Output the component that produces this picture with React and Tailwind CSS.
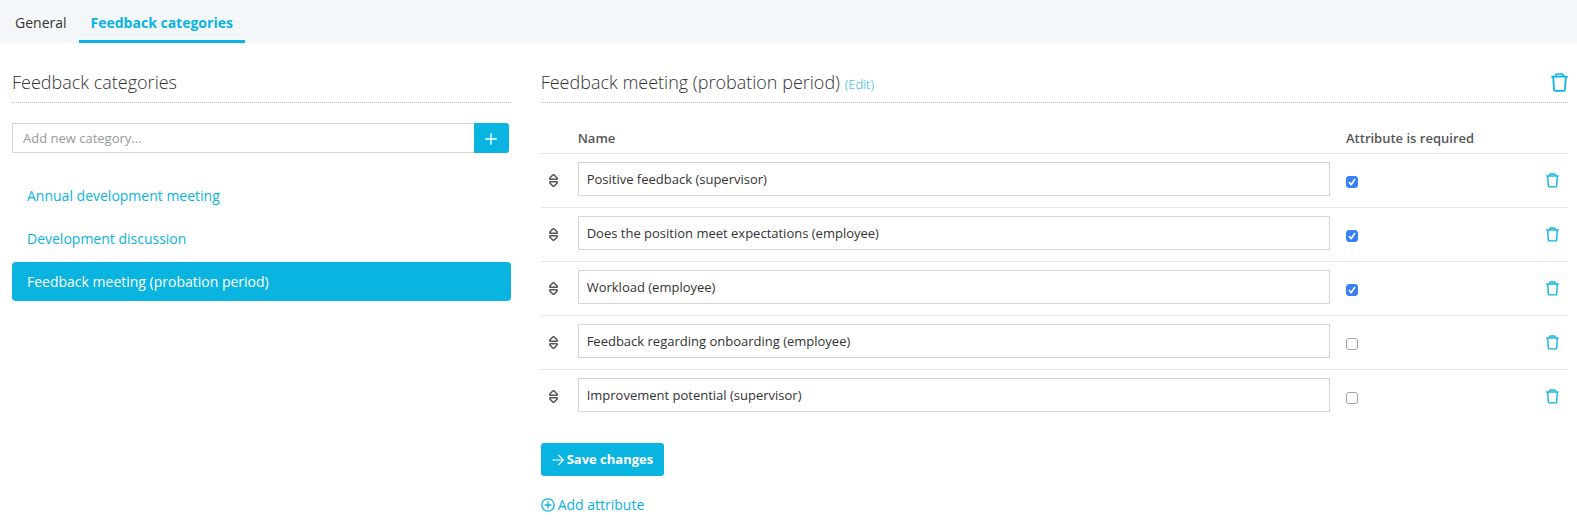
import React, { useState } from "react";

const categories = [
  { id: 1, name: "Annual development meeting" },
  { id: 2, name: "Development discussion" },
  { id: 3, name: "Feedback meeting (probation period)" },
];

const initialAttributes = [
  { id: 1, name: "Positive feedback (supervisor)", required: true },
  { id: 2, name: "Does the position meet expectations (employee)", required: true },
  { id: 3, name: "Workload (employee)", required: true },
  { id: 4, name: "Feedback regarding onboarding (employee)", required: false },
  { id: 5, name: "Improvement potential (supervisor)", required: false },
];

const TrashIcon = ({ className }) => (
  <svg viewBox="0 0 17 19" fill="none" stroke="currentColor" className={className}>
    <path d="M0.3 3.6H16.7" strokeWidth="1.8" />
    <path d="M4.6 3.4C4.6 1.7 5.2 1 6.4 1h4.2c1.2 0 1.8 0.7 1.8 2.4" strokeWidth="1.7" />
    <path d="M2.2 3.8L3 16.6c0.1 0.8 0.5 1.2 1.3 1.2h8.4c0.8 0 1.2-0.4 1.3-1.2L14.8 3.8" strokeWidth="1.8" />
  </svg>
);

const SortIcon = () => (
  <svg viewBox="0 0 9 13" fill="none" stroke="currentColor" strokeWidth="1.5" strokeLinejoin="round" className="w-[9px] h-[13px]">
    <path d="M3.7 1.1L0.9 4.1c-0.4 0.5-0.2 1.2 0.5 1.2h6.2c0.7 0 0.9-0.7 0.5-1.2L5.3 1.1c-0.5-0.5-1.1-0.5-1.6 0z" />
    <path d="M3.7 11.9L0.9 8.9c-0.4-0.5-0.2-1.2 0.5-1.2h6.2c0.7 0 0.9 0.7 0.5 1.2L5.3 11.9c-0.5 0.5-1.1 0.5-1.6 0z" />
  </svg>
);

const Checkbox = ({ label, checked, onChange }) => (
  <span className="relative block size-3">
    <input
      type="checkbox"
      aria-label={label}
      checked={checked}
      onChange={onChange}
      className="block size-3 appearance-none rounded-[3px] border border-[#a3a3a3] bg-white checked:border-[#3880f8] checked:bg-[#3880f8]"
    />
    {checked && (
      <svg viewBox="0 0 12 12" fill="none" stroke="white" strokeWidth="1.6" strokeLinecap="round" strokeLinejoin="round" className="pointer-events-none absolute inset-0 size-3">
        <path d="M3.3 6.6L5.1 8.7L8.6 3.5" />
      </svg>
    )}
  </span>
);

const App = () => {
  const [attributes, setAttributes] = useState(initialAttributes);
  const [activeCategory, setActiveCategory] = useState(3);

  const updateAttribute = (id, changes) => {
    setAttributes(attributes.map((a) => (a.id === id ? { ...a, ...changes } : a)));
  };

  return (
    <div className="bg-white text-sm text-[#333] font-['Open_Sans',sans-serif]">
      {/* Tabs */}
      <nav className="flex bg-[#f3f7fa]">
        <a href="#general" className="h-[43px] pl-[15px] pr-3 pt-3 leading-[22px]">General</a>
        <a href="#categories" className="h-[43px] border-b-3 border-[#0ab4e0] px-3 pt-3 leading-[22px] font-bold text-[#0ab4e0]">
          Feedback categories
        </a>
      </nav>

      <main className="grid grid-cols-3 gap-[30px] pt-6 pl-3 pr-[9px]">
        {/* Category list */}
        <section>
          <h2 className="h-9 border-b border-dotted border-[#bbb] pt-[3px] text-lg leading-6 font-light text-[#333]">Feedback categories</h2>
          <form className="mt-5 mr-[2px] flex" onSubmit={(e) => e.preventDefault()}>
            <input
              type="text"
              aria-label="Add new category"
              placeholder="Add new category..."
              className="h-[30px] min-w-0 flex-1 border border-r-0 border-[#d5d5d5] px-[10px] text-[13px] placeholder:text-[#999]"
            />
            <button type="submit" aria-label="Add" className="flex h-[30px] w-[35px] items-center justify-center rounded-r-[3px] bg-[#0ab4e0] pt-[2px] text-white">
              <svg viewBox="0 0 12 12" stroke="currentColor" strokeWidth="1.3" className="size-3">
                <path d="M6 0.2V11.8M0.2 6H11.8" />
              </svg>
            </button>
          </form>
          <ul className="mt-[23px] flex flex-col gap-1">
            {categories.map((category) => (
              <li key={category.id}>
                <a
                  href="#category"
                  onClick={() => setActiveCategory(category.id)}
                  className={`block rounded-[4px] px-[15px] py-[10px] leading-[19px] ${
                    category.id === activeCategory ? "bg-[#0ab4e0] text-white" : "text-[#0ab4e0]"
                  }`}
                >
                  {category.name}
                </a>
              </li>
            ))}
          </ul>
        </section>

        {/* Attributes of the selected category */}
        <section className="col-span-2">
          <div className="flex h-9 items-start justify-between border-b border-dotted border-[#bbb] pt-[3px]">
            <h2 className="text-lg leading-6 font-light text-[#333]">
              Feedback meeting (probation period) <a href="#edit" className="text-[13px] text-[#0ab4e0]">(Edit)</a>
            </h2>
            <button type="button" aria-label="Delete category" className="mt-[3px] text-[#0ab4e0]">
              <TrashIcon className="w-[17px] h-[19px]" />
            </button>
          </div>

          <table className="mt-5 w-full table-fixed border-separate border-spacing-0">
            <thead>
              <tr className="h-[30px] text-left text-[13px] text-[#555]">
                <th className="w-[29px]"></th>
                <th className="px-2 font-semibold">Name</th>
                <th className="w-[200px] px-2 font-semibold">Attribute is required</th>
                <th className="w-[30px]"></th>
              </tr>
            </thead>
            <tbody>
              {attributes.map((attribute) => (
                <tr key={attribute.id} className="h-[54px]">
                  <td className="border-t border-[#e5e5e5] pl-2 text-[#555]">
                    <SortIcon />
                  </td>
                  <td className="border-t border-[#e5e5e5] px-2 pt-2 pb-[11px]">
                    <input
                      type="text"
                      aria-label="Attribute name"
                      value={attribute.name}
                      onChange={(e) => updateAttribute(attribute.id, { name: e.target.value })}
                      className="block h-[34px] w-full border border-[#d5d5d5] px-2 text-[13px]"
                    />
                  </td>
                  <td className="border-t border-[#e5e5e5] px-2 pt-[2px]">
                    <Checkbox
                      label="Attribute is required"
                      checked={attribute.required}
                      onChange={(e) => updateAttribute(attribute.id, { required: e.target.checked })}
                    />
                  </td>
                  <td className="border-t border-[#e5e5e5] pl-2">
                    <button type="button" aria-label="Delete attribute" className="block text-[#0ab4e0]">
                      <TrashIcon className="w-[13px] h-[15px]" />
                    </button>
                  </td>
                </tr>
              ))}
            </tbody>
          </table>

          <button type="button" className="mt-5 flex h-[33px] items-center gap-[3px] rounded-[3px] bg-[#0ab4e0] px-[11px] text-[13px] font-bold text-white">
            <svg viewBox="0 0 12 12" fill="none" stroke="currentColor" strokeWidth="1.2" className="size-3">
              <path d="M0.3 6H11.3M6.2 0.8L11.4 6L6.2 11.2" />
            </svg>
            Save changes
          </button>

          <a href="#add" className="mt-[18px] inline-flex items-center gap-[3px] leading-[22px] text-[#0ab4e0]">
            <svg viewBox="0 0 14 14" fill="none" stroke="currentColor" strokeWidth="1.3" className="size-[14px]">
              <circle cx="7" cy="7" r="6.2" />
              <path d="M7 3.6V10.4M3.6 7H10.4" />
            </svg>
            Add attribute
          </a>
        </section>
      </main>
    </div>
  );
};

export default App;
